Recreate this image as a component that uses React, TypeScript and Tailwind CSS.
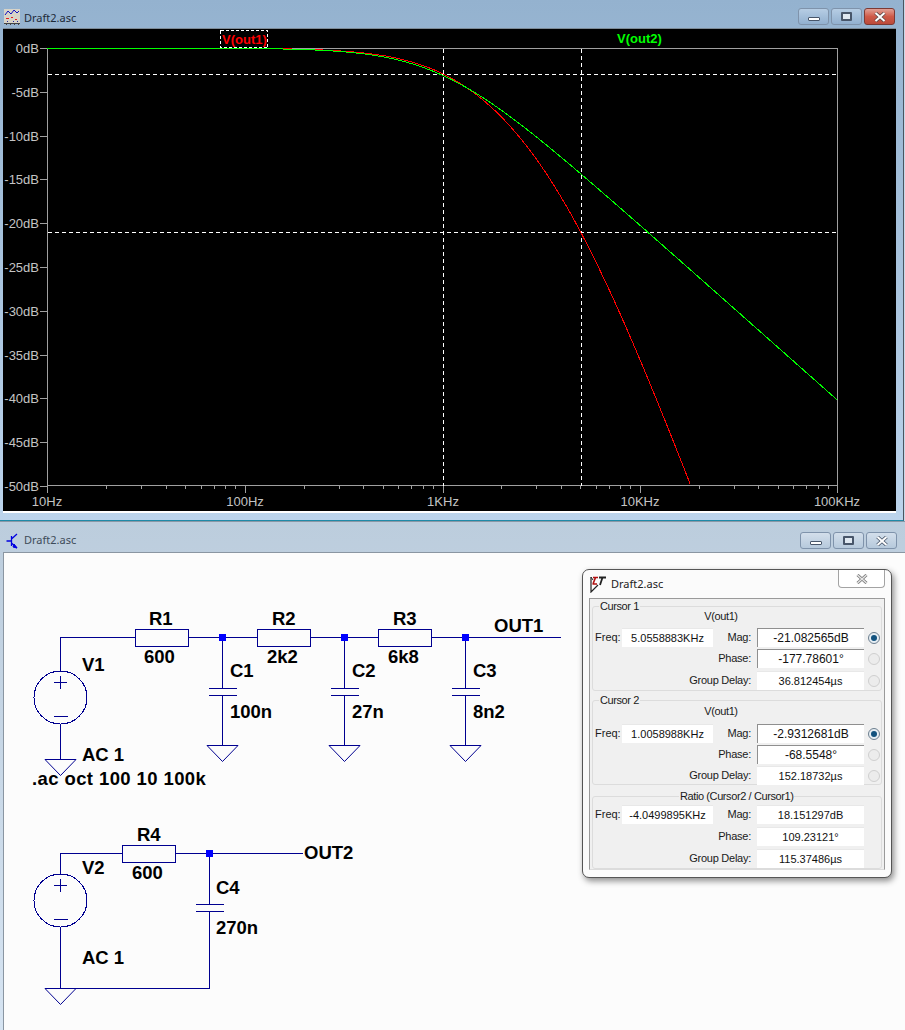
import React from 'react';

const BLUE = '#000090';
const FONT = { fontFamily: '"Liberation Sans", Arial, sans-serif' };

// plot scale
const xOf = (f: number) => 47 + (Math.log10(f) - 1) * 197.5;
const yOf = (db: number) => 48 + (-db * 438) / 50;

type C = [number, number];
const add = (a: C, b: C): C => [a[0] + b[0], a[1] + b[1]];
const mul = (a: C, b: C): C => [a[0] * b[0] - a[1] * b[1], a[0] * b[1] + a[1] * b[0]];

// RC ladder, walked back from the open end with ABCD terms
const ladderDb = (f: number, stages: [number, number][]) => {
  const w = 2 * Math.PI * f;
  let v: C = [1, 0];
  let i: C = [0, 0];
  for (let n = stages.length - 1; n >= 0; n--) {
    const [r, c] = stages[n];
    i = add(i, mul(v, [0, w * c]));
    v = add(v, mul(i, [r, 0]));
  }
  return -10 * Math.log10(v[0] * v[0] + v[1] * v[1]);
};

const curve = (stages: [number, number][]) => {
  const pts: string[] = [];
  for (let x = 47; x <= 837; x += 1) {
    const f = Math.pow(10, 1 + (x - xOf(10)) / 197.5);
    const y = yOf(ladderDb(f, stages));
    if (y > 486) break;
    pts.push(`${x},${y.toFixed(1)}`);
  }
  return pts.join(' ');
};

const OUT1: [number, number][] = [[600, 100e-9], [2200, 27e-9], [6800, 8.2e-9]];
const OUT2: [number, number][] = [[600, 270e-9]];

const WinButtons = ({ active }: { active: boolean }) => (
  <div className="flex gap-[2px]">
    <div className={`flex h-[17px] w-[31px] items-end justify-center rounded-[3px] border border-[#7f93ab] pb-[3px] ${active ? 'bg-gradient-to-b from-[#b6cde4] to-[#92b0cf]' : 'bg-gradient-to-b from-[#d3dfeb] to-[#b6c9dc]'}`}>
      <div className="h-[4px] w-[12px] rounded-[1px] border border-[#48566a] bg-white" />
    </div>
    <div className={`flex h-[17px] w-[31px] items-center justify-center rounded-[3px] border border-[#7f93ab] ${active ? 'bg-gradient-to-b from-[#b6cde4] to-[#92b0cf]' : 'bg-gradient-to-b from-[#d3dfeb] to-[#b6c9dc]'}`}>
      <div className="h-[9px] w-[11px] rounded-[1px] border-2 border-[#48566a] bg-[#dfe8f1]" />
    </div>
    <div className={`flex h-[17px] w-[31px] items-center justify-center rounded-[3px] border ${active ? 'border-[#7d3a34] bg-gradient-to-b from-[#e0a096] via-[#cf5a48] to-[#bb4a3a]' : 'border-[#7f93ab] bg-gradient-to-b from-[#d3dfeb] to-[#b6c9dc]'}`}>
      <svg width="12" height="10" viewBox="0 0 12 10">
        <path d="M1.5 1 L10.5 9 M10.5 1 L1.5 9" stroke={active ? '#5a4a4a' : '#48566a'} strokeWidth="3.6" />
        <path d="M1.5 1 L10.5 9 M10.5 1 L1.5 9" stroke="#fff" strokeWidth="2" />
      </svg>
    </div>
  </div>
);

const PlotIcon = () => (
  <svg width="16" height="16" viewBox="0 0 16 16" shapeRendering="crispEdges">
    <rect x="0" y="0" width="16" height="14" fill="#d8d4c8" />
    <path d="M1 6 L4 2 L7 5 L10 1 L13 4 L15 2" stroke="#1010c0" fill="none" shapeRendering="auto" />
    <path d="M2 9 h3 M7 8 h2 M11 10 h2" stroke="#e02020" />
    <path d="M3 12 h1 M9 12 h1 M13 12 h1" stroke="#2020a0" />
    <path d="M0 14 h16" stroke="#444" />
    <path d="M2 15 v1 M6 15 v1 M10 15 v1 M14 15 v1" stroke="#444" />
  </svg>
);

const TransistorIcon = () => (
  <svg width="14" height="16" viewBox="0 0 14 16" fill="none" stroke="#0000e0">
    <path d="M0.5 8 H5 M5.5 3 V13 M5.5 6 L11 1 M5.5 10 L11 15" strokeWidth="1.3" />
    <path d="M8 11 L11 15 L7 14 Z" fill="#0000e0" />
  </svg>
);

const LtIcon = () => (
  <svg width="17" height="17" viewBox="0 0 17 17" fill="none">
    <path d="M1 1 V16 L8 9" stroke="#222" strokeWidth="1.2" />
    <path d="M1 1 L3 4" stroke="#222" />
    <path d="M3 1.5 H8 M5.5 1.5 L3 8 M2.5 8 H7" stroke="#b01010" strokeWidth="1.6" />
    <path d="M9 1.5 H16 M12.5 1.5 L10 9" stroke="#222" strokeWidth="1.8" />
  </svg>
);

const Plot = () => {
  const yLabels = Array.from({ length: 11 }, (_, i) => i * 5);
  const decades = [
    { x: 47, t: '10Hz' },
    { x: 245, t: '100Hz' },
    { x: 443, t: '1KHz' },
    { x: 640, t: '10KHz' },
    { x: 837, t: '100KHz' },
  ];
  const minors: number[] = [];
  for (let d = 0; d < 4; d++) {
    for (let m = 2; m < 10; m++) minors.push(47 + d * 197.5 + Math.log10(m) * 197.5);
  }
  return (
    <svg width="893" height="482" viewBox="3 29 893 482" className="block" style={FONT}>
      <g shapeRendering="crispEdges">
        <rect x="47.5" y="48.5" width="790" height="437" fill="none" stroke="#a0a0a0" />
        {yLabels.map((v) => (
          <path key={v} d={`M40 ${Math.round(yOf(-v)) + 0.5} H47`} stroke="#a0a0a0" />
        ))}
        {decades.map((d) => (
          <path key={d.x} d={`M${d.x + 0.5} 486 V493`} stroke="#a0a0a0" />
        ))}
        {minors.map((x) => (
          <path key={x} d={`M${Math.round(x) + 0.5} 486 V489`} stroke="#a0a0a0" />
        ))}
        <path d="M48 74.5 H837 M48 232.5 H837 M443.5 49 V486 M581.5 49 V486" stroke="#fff" strokeDasharray="4 3" />
      </g>
      {yLabels.map((v) => (
        <text key={v} x="39" y={yOf(-v) + 5} textAnchor="end" fontSize="13" fill="#c4c4c4">
          {v === 0 ? '0dB' : `-${v}dB`}
        </text>
      ))}
      {decades.map((d) => (
        <text key={d.x} x={d.x} y="506" textAnchor="middle" fontSize="13" fill="#c4c4c4">
          {d.t}
        </text>
      ))}
      <polyline points={curve(OUT1)} fill="none" stroke="#ff0000" shapeRendering="crispEdges" />
      <polyline points={curve(OUT2)} fill="none" stroke="#00ff00" shapeRendering="crispEdges" />
      <rect x="220.5" y="30.5" width="47" height="17" fill="none" stroke="#fff" strokeDasharray="3 2" shapeRendering="crispEdges" />
      <text x="222" y="44" fontSize="13" fontWeight="700" fill="#ff0000">V(out1)</text>
      <text x="617" y="43" fontSize="13" fontWeight="700" fill="#00ff00">V(out2)</text>
    </svg>
  );
};

const Ground = ({ x, y }: { x: number; y: number }) => (
  <path d={`M${x - 15.5} ${y} H${x + 15.5} L${x} ${y + 16} Z`} fill="none" stroke={BLUE} />
);

const Dot = ({ x, y }: { x: number; y: number }) => <rect x={x - 3.5} y={y - 3.5} width="7" height="7" fill="#0000ff" />;

const Res = ({ x, y }: { x: number; y: number }) => <rect x={x + 0.5} y={y - 8.5} width="53" height="17" fill="#fcfcfc" stroke={BLUE} />;

const Cap = ({ x, y }: { x: number; y: number }) => (
  <path d={`M${x - 14} ${y} H${x + 14} M${x - 14} ${y + 7} H${x + 14}`} stroke={BLUE} />
);

const Source = ({ x, y }: { x: number; y: number }) => (
  <g fill="none" stroke={BLUE}>
    <circle cx={x} cy={y} r="26.5" shapeRendering="crispEdges" />
    <path d={`M${x} ${y - 22} V${y - 9} M${x - 6.5} ${y - 15.5} H${x + 6.5} M${x - 7} ${y + 18.5} H${x + 7}`} shapeRendering="crispEdges" />
  </g>
);

const Label = ({ x, y, spacing, children }: { x: number; y: number; spacing?: number; children: React.ReactNode }) => (
  <text x={x} y={y} fontSize="18.5" fontWeight="700" fill="#000" letterSpacing={spacing}>
    {children}
  </text>
);

const Schematic = () => (
  <svg width="901" height="477" viewBox="4 553 901 477" className="block" style={FONT}>
    <g shapeRendering="crispEdges">
      {/* upper filter */}
      <path
        d="M60.5 671 V637.5 H561 M222.5 637.5 V688 M222.5 696 V745 M344.5 637.5 V688 M344.5 696 V745 M465.5 637.5 V688 M465.5 696 V745 M60.5 724 V759"
        fill="none"
        stroke={BLUE}
      />
      <Res x={135} y={637.5} />
      <Res x={257} y={637.5} />
      <Res x={378} y={637.5} />
      <Cap x={222.5} y={688.5} />
      <Cap x={344.5} y={688.5} />
      <Cap x={465.5} y={688.5} />
      <Dot x={222.5} y={637.5} />
      <Dot x={344.5} y={637.5} />
      <Dot x={465.5} y={637.5} />
      {/* lower filter */}
      <path d="M60.5 874 V853.5 H303 M209.5 853.5 V904 M209.5 911 V988.5 H60.5 V927" fill="none" stroke={BLUE} />
      <Res x={122} y={853.5} />
      <Cap x={209.5} y={904.5} />
      <Dot x={209.5} y={853.5} />
    </g>
    <Source x={60.5} y={697.5} />
    <Source x={60.5} y={900.5} />
    <Ground x={60.5} y={759.5} />
    <Ground x={222.5} y={745.5} />
    <Ground x={344.5} y={745.5} />
    <Ground x={465.5} y={745.5} />
    <Ground x={60.5} y={988.5} />
    <Label x={149} y={625}>R1</Label>
    <Label x={144} y={663}>600</Label>
    <Label x={272} y={625}>R2</Label>
    <Label x={267} y={663}>2k2</Label>
    <Label x={393} y={625}>R3</Label>
    <Label x={388} y={663}>6k8</Label>
    <Label x={230} y={677}>C1</Label>
    <Label x={230} y={718}>100n</Label>
    <Label x={352} y={677}>C2</Label>
    <Label x={352} y={718}>27n</Label>
    <Label x={473} y={677}>C3</Label>
    <Label x={473} y={718}>8n2</Label>
    <Label x={494} y={632}>OUT1</Label>
    <Label x={82} y={671}>V1</Label>
    <Label x={82} y={761}>AC 1</Label>
    <Label x={32} y={785} spacing={0.4}>.ac oct 100 10 100k</Label>
    <Label x={137} y={841}>R4</Label>
    <Label x={132} y={879}>600</Label>
    <Label x={82} y={874}>V2</Label>
    <Label x={216} y={894}>C4</Label>
    <Label x={216} y={934}>270n</Label>
    <Label x={304} y={859}>OUT2</Label>
    <Label x={82} y={964}>AC 1</Label>
  </svg>
);

const Field = ({ text, w, strong, big }: { text: string; w: string; strong?: boolean; big?: boolean }) => (
  <div
    className={`flex h-[19px] shrink-0 items-center justify-center bg-white text-[#111] ${w} ${big ? 'text-[12px]' : 'text-[11px]'} ${strong ? 'border-t border-l border-[#8f8f8f]' : 'border-t border-[#e8e8e8]'}`}
  >
    {text}
  </div>
);

const Radio = ({ on }: { on?: boolean }) => (
  <div className={`flex h-[12px] w-[12px] shrink-0 items-center justify-center rounded-full border ${on ? 'border-[#6d7f8f] bg-[#e6eef4]' : 'border-[#cfcfcf] bg-[#ececec]'}`}>
    {on && <div className="h-[6px] w-[6px] rounded-full bg-[#12527f]" />}
  </div>
);

type Row = { label: string; value: string; radio?: boolean; strong?: boolean; big?: boolean };

const Rows = ({ freq, rows, gap, lastGap }: { freq: string; rows: Row[]; gap: string; lastGap?: boolean }) => (
  <div className={`flex flex-col ${gap}`}>
    {rows.map((r, i) => (
      <div key={r.label} className={`flex h-[19px] items-center ${lastGap && i === 2 ? 'mt-[1px]' : ''}`}>
        <div className="flex w-[118px] shrink-0 items-center">
          {i === 0 && (
            <>
              <span className="w-[27px]">Freq:</span>
              <Field text={freq} w="w-[91px]" />
            </>
          )}
        </div>
        <span className="w-[38px] shrink-0 whitespace-nowrap text-right tracking-[-0.25px]" dir="rtl">
          <bdi>{r.label}</bdi>
        </span>
        <div className="w-[6px] shrink-0" />
        <Field text={r.value} w="w-[107px]" strong={r.strong} big={r.big} />
        {r.radio !== undefined && (
          <div className="ml-[4px]">
            <Radio on={r.radio} />
          </div>
        )}
      </div>
    ))}
  </div>
);

const Group = ({ title, center, h, children }: { title: string; center?: boolean; h: string; children: React.ReactNode }) => (
  <div className={`relative mx-[2px] shrink-0 rounded-[3px] border border-[#dcdcdc] pl-[2px] ${h}`}>
    <span className={`absolute top-[-7px] bg-[#f0f0f0] px-[1px] leading-[13px] tracking-[-0.4px] ${center ? 'left-[86px]' : 'left-[6px]'}`}>{title}</span>
    {children}
  </div>
);

const CursorDialog = () => (
  <div
    className="absolute left-[582px] top-[569px] flex h-[309px] w-[310px] flex-col rounded-[7px] border border-[#555] bg-[#fbfbfb] px-[6px] pb-[7px] shadow-[2px_3px_6px_rgba(0,0,0,0.45)]"
    style={FONT}
  >
    <div className="flex h-[28px] shrink-0 items-start">
      <div className="ml-[1px] mt-[6px]">
        <LtIcon />
      </div>
      <span className="ml-[4px] mt-[6px] text-[11px] leading-[16px] text-[#222]" style={{ fontFamily: '"Noto Sans", sans-serif' }}>
        Draft2.asc
      </span>
      <div className="ml-auto flex h-[18px] w-[47px] items-center justify-center rounded-b-[4px] border border-t-0 border-[#a3a3a3] bg-white">
        <svg width="12" height="10" viewBox="0 0 12 10">
          <path d="M1.5 1 L10.5 9 M10.5 1 L1.5 9" stroke="#777" strokeWidth="3" />
          <path d="M1.5 1 L10.5 9 M10.5 1 L1.5 9" stroke="#e8e8e8" strokeWidth="1.4" />
        </svg>
      </div>
    </div>
    <div className="flex min-h-0 flex-1 flex-col border border-[#9a9a9a] border-b-[#dcdcdc] bg-[#f0f0f0] pt-[7px] text-[11px] leading-[13px] text-[#1a1a1a]">
      <Group title="Cursor 1" h="h-[85px]">
        <div className="pt-[3px] pb-[5px] pr-[34px] text-center tracking-[-0.4px]">V(out1)</div>
        <Rows
          freq="5.0558883KHz"
          gap="gap-[2px]"
          lastGap
          rows={[
            { label: 'Mag:', value: '-21.082565dB', radio: true, strong: true, big: true },
            { label: 'Phase:', value: '-177.78601°', radio: false, strong: true, big: true },
            { label: 'Group Delay:', value: '36.812454µs', radio: false },
          ]}
        />
      </Group>
      <div className="h-[9px] shrink-0" />
      <Group title="Cursor 2" h="h-[85px]">
        <div className="pt-[4px] pb-[6px] pr-[34px] text-center tracking-[-0.4px]">V(out1)</div>
        <Rows
          freq="1.0058988KHz"
          gap="gap-[2px]"
          rows={[
            { label: 'Mag:', value: '-2.9312681dB', radio: true, strong: true, big: true },
            { label: 'Phase:', value: '-68.5548°', radio: false, strong: true, big: true },
            { label: 'Group Delay:', value: '152.18732µs', radio: false },
          ]}
        />
      </Group>
      <div className="h-[11px] shrink-0" />
      <Group title="Ratio (Cursor2 / Cursor1)" center h="h-[73px]">
        <div className="pt-[8px]">
          <Rows
            freq="-4.0499895KHz"
            gap="gap-[3px]"
            rows={[
              { label: 'Mag:', value: '18.151297dB' },
              { label: 'Phase:', value: '109.23121°' },
              { label: 'Group Delay:', value: '115.37486µs' },
            ]}
          />
        </div>
      </Group>
    </div>
  </div>
);

export default function App() {
  return (
    <div className="relative flex h-[1030px] w-[905px] flex-col overflow-hidden bg-[#c8d8e8]">
      {/* plot window */}
      <div className="flex h-[521px] w-[904px] shrink-0 flex-col border-r border-b border-r-[#4a5560] border-b-[#1f8aa8] bg-gradient-to-b from-[#94b2cf] to-[#bcd4ec]">
        <div className="flex h-[28px] shrink-0 items-center pl-[4px] pr-[8px] pt-[5px]">
          <PlotIcon />
          <span className="ml-[4px] mt-[3px] text-[11px] text-[#1d2a38]" style={{ fontFamily: '"Noto Sans", sans-serif' }}>
            Draft2.asc
          </span>
          <div className="ml-auto">
            <WinButtons active />
          </div>
        </div>
        <div className="ml-[3px] mr-[7px] border-t border-t-[#7d8a96] bg-black">
          <Plot />
        </div>
        <div className="ml-[3px] mr-[7px] h-[2px] bg-white" />
      </div>
      {/* schematic window */}
      <div className="flex min-h-0 flex-1 flex-col border-t border-t-[#8a98a6] bg-gradient-to-b from-[#bccddd] to-[#d6e4f2]">
        <div className="flex h-[30px] shrink-0 items-center pl-[6px] pr-[8px] pt-[7px]">
          <TransistorIcon />
          <span className="ml-[4px] text-[11px] text-[#3e4c5a]" style={{ fontFamily: '"Noto Sans", sans-serif' }}>
            Draft2.asc
          </span>
          <div className="ml-auto">
            <WinButtons active={false} />
          </div>
        </div>
        <div className="ml-[3px] min-h-0 flex-1 border-t border-l border-[#8a96a2] bg-[#fcfcfc]">
          <Schematic />
        </div>
      </div>
      <CursorDialog />
    </div>
  );
}
